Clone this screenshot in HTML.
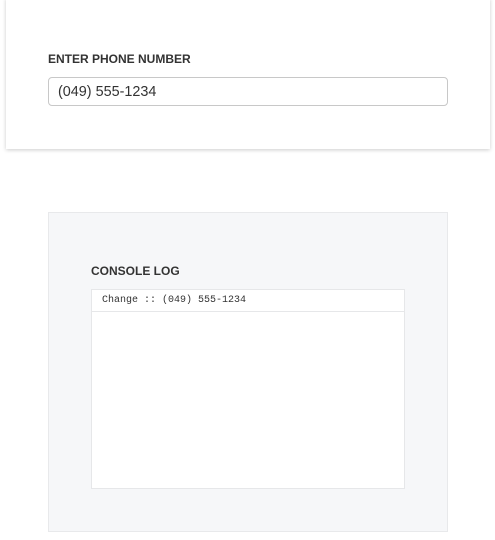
<!DOCTYPE html>
<html><head><style>
body{margin:0;width:495px;height:540px;background:#fff;font-family:"Liberation Sans",sans-serif;position:relative;overflow:hidden}
.card{position:absolute;left:6px;top:-2px;width:484px;height:151px;background:#fff;box-shadow:0 1px 4px rgba(0,0,0,.2)}
.lbl{position:absolute;font-weight:bold;font-size:12px;color:#333}
.inp{position:absolute;left:48px;top:77px;border:1px solid #c8c8c8;border-radius:4px;box-sizing:border-box;width:400px;height:29px;font-size:14.4px;color:#333;padding:6px 9px;line-height:16px}
.con{position:absolute;left:48px;top:212px;width:400px;height:320px;box-sizing:border-box;background:#f6f7f9;border:1px solid #e8e9eb}
.log{position:absolute;left:91px;top:289px;width:314px;height:200px;box-sizing:border-box;background:#fff;border:1px solid #e6e7e9}
.row{height:21px;border-bottom:1px solid #e6e7e9;font-family:"Liberation Mono",monospace;font-size:10px;color:#333;padding-left:10px;line-height:22px}
</style></head><body>
<div class="card"></div>
<div class="lbl" style="left:48px;top:52px">ENTER PHONE NUMBER</div>
<div class="inp">(049) 555-1234</div>
<div class="con"></div>
<div class="lbl" style="left:91px;top:264px">CONSOLE LOG</div>
<div class="log"><div class="row">Change :: (049) 555-1234</div></div>
</body></html>
